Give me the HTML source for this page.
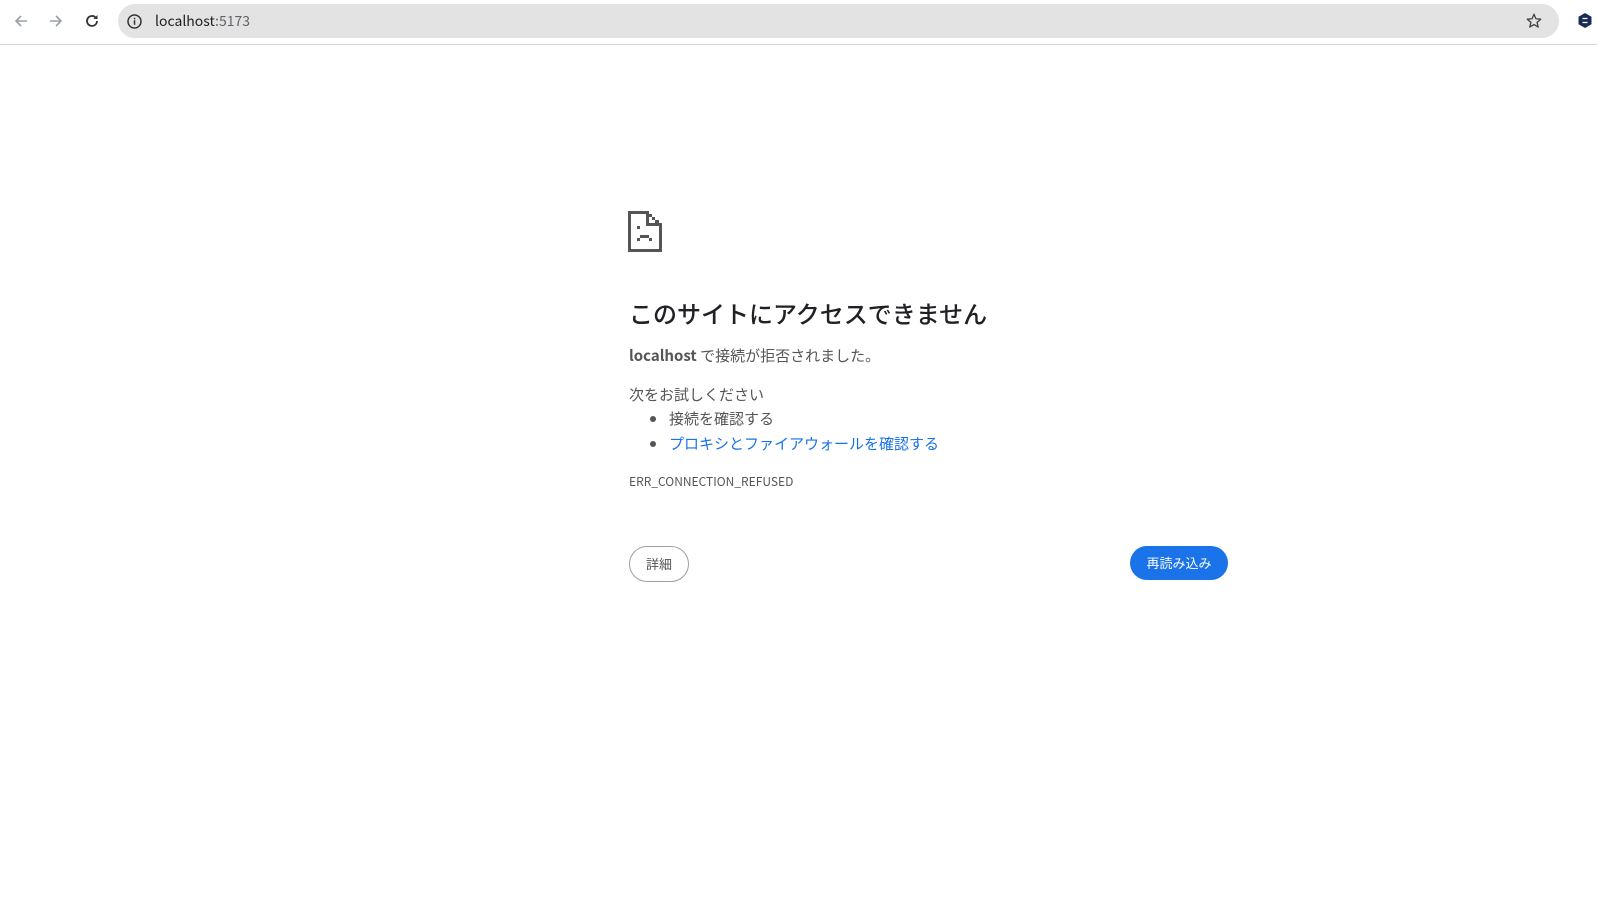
<!DOCTYPE html>
<html><head><meta charset="utf-8">
<style>
*{margin:0;padding:0;box-sizing:border-box}
body{width:1597px;height:898px;background:#fff;font-family:"Liberation Sans","Noto Sans CJK JP",sans-serif;position:relative;overflow:hidden}
.bar{position:absolute;left:0;top:0;width:1597px;height:45px;background:#fff;border-bottom:1px solid #d6d6d6}
.omni{position:absolute;left:118px;top:4px;width:1441px;height:34px;border-radius:17px;background:#e3e3e3}
.url{position:absolute;left:155px;top:12px;font-size:14px;color:#202124;font-family:"Noto Sans CJK JP","Liberation Sans",sans-serif;line-height:18px}
.url span{color:#5f6368}
.t{position:absolute;color:#555;font-family:"Noto Sans CJK JP","Liberation Sans",sans-serif;white-space:nowrap}
.dot{position:absolute;width:6px;height:6px;border-radius:3px;background:#555}
</style></head><body>
<div class="bar">
 <svg style="position:absolute;left:12px;top:12px" width="18" height="18" viewBox="0 0 18 18"><path d="M15 9H4M9 4L4 9l5 5" stroke="#9aa0a6" stroke-width="1.6" fill="none"/></svg>
 <svg style="position:absolute;left:47px;top:12px" width="18" height="18" viewBox="0 0 18 18"><path d="M3 9h11M9 4l5 5-5 5" stroke="#9aa0a6" stroke-width="1.6" fill="none"/></svg>
 <svg style="position:absolute;left:83px;top:12px" width="18" height="18" viewBox="0 0 18 18"><path d="M14 9a5 5 0 1 1-1.5-3.6" stroke="#333" stroke-width="1.8" fill="none"/><path d="M14.5 3v4h-4z" fill="#333"/></svg>
 <div class="omni"></div>
 <svg style="position:absolute;left:126px;top:13px" width="17" height="17" viewBox="0 0 17 17"><circle cx="8.5" cy="8.5" r="6.5" stroke="#333" stroke-width="1.5" fill="none"/><rect x="7.8" y="7.3" width="1.5" height="4.5" fill="#333"/><rect x="7.8" y="4.8" width="1.5" height="1.5" fill="#333"/></svg>
 <div class="url">localhost<span>:5173</span></div>
 <svg style="position:absolute;left:1525px;top:12px" width="18" height="18" viewBox="0 0 24 24"><path d="M12 3l2.6 6 6.4.6-4.9 4.2 1.5 6.3L12 16.8 6.4 20.1l1.5-6.3L3 9.6 9.4 9z" stroke="#444" stroke-width="1.8" fill="none" stroke-linejoin="round"/></svg>
 <svg style="position:absolute;left:1578px;top:13px" width="14" height="15" viewBox="0 0 14 15"><path d="M7 0l6.5 3.7v7.6L7 15 .5 11.3V3.7z" fill="#1a2c55"/><path d="M4.5 5.5h5M4.5 9.5h5" stroke="#fff" stroke-width="1.3"/></svg>
</div>

<svg style="position:absolute;left:628px;top:211px" width="34" height="41" viewBox="0 0 34 41" shape-rendering="crispEdges">
<path d="M0 0h21v3h-18v35h28v-26h3v29h-34z" fill="#555"/>
<path d="M18 0h3v12h10v3h-13z" fill="#555"/>
<rect x="21" y="3" width="3" height="3" fill="#555"/><rect x="24" y="6" width="3" height="3" fill="#555"/><rect x="27" y="9" width="4" height="3" fill="#555"/>
<rect x="9" y="15" width="3" height="3" fill="#555"/>
<rect x="9" y="27" width="3" height="3" fill="#555"/><rect x="12" y="24" width="9" height="3" fill="#555"/><rect x="21" y="27" width="3" height="3" fill="#555"/>
</svg>

<div class="t" style="left:629px;top:297px;font-size:24px;color:#202124;line-height:32px;font-weight:500">このサイトにアクセスできません</div>
<div class="t" style="left:629px;top:345px;font-size:15px;line-height:22px"><b style="font-weight:700;color:#555">localhost</b> で接続が拒否されました。</div>
<div class="t" style="left:629px;top:384px;font-size:15px;line-height:22px">次をお試しください</div>
<div class="dot" style="left:650px;top:416px"></div>
<div class="t" style="left:669px;top:408px;font-size:15px;line-height:22px">接続を確認する</div>
<div class="dot" style="left:650px;top:441px"></div>
<div class="t" style="left:669px;top:433px;font-size:15px;line-height:22px;color:#1a73e8">プロキシとファイアウォールを確認する</div>
<div class="t" style="left:629px;top:474px;font-size:12px;line-height:16px">ERR_CONNECTION_REFUSED</div>

<div style="position:absolute;left:629px;top:546px;width:60px;height:36px;border:1px solid #9aa0a6;border-radius:18px;font-size:13px;color:#555;text-align:center;line-height:34px;font-family:'Noto Sans CJK JP',sans-serif">詳細</div>
<div style="position:absolute;left:1130px;top:546px;width:98px;height:34px;background:#1a73e8;border-radius:17px;font-size:13px;color:#fff;text-align:center;line-height:34px;font-family:'Noto Sans CJK JP',sans-serif">再読み込み</div>
</body></html>
